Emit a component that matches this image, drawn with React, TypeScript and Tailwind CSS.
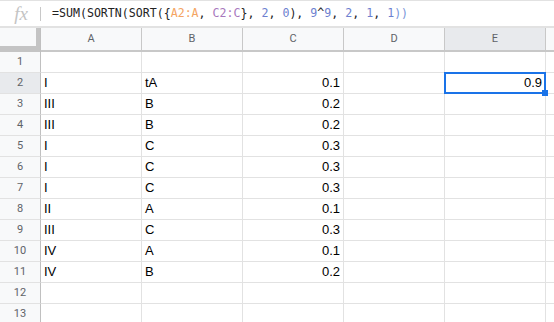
import React from 'react';

type Row = { a?: string; b?: string; c?: string; e?: string };

const rows: Row[] = [
  {},
  { a: 'I', b: 'tA', c: '0.1', e: '0.9' },
  { a: 'III', b: 'B', c: '0.2' },
  { a: 'III', b: 'B', c: '0.2' },
  { a: 'I', b: 'C', c: '0.3' },
  { a: 'I', b: 'C', c: '0.3' },
  { a: 'I', b: 'C', c: '0.3' },
  { a: 'II', b: 'A', c: '0.1' },
  { a: 'III', b: 'C', c: '0.3' },
  { a: 'IV', b: 'A', c: '0.1' },
  { a: 'IV', b: 'B', c: '0.2' },
  {},
  {},
];

const cols = ['A', 'B', 'C', 'D', 'E'];

// formula pieces: [text, colour class]
const formula: [string, string][] = [
  ['=SUM(SORTN(SORT({', 'text-[#222]'],
  ['A2:A', 'text-[#f4a462]'],
  [', ', 'text-[#222]'],
  ['C2:C', 'text-[#a877bd]'],
  ['}, ', 'text-[#222]'],
  ['2', 'text-[#6d7fd0]'],
  [', ', 'text-[#222]'],
  ['0', 'text-[#6d7fd0]'],
  ['), ', 'text-[#222]'],
  ['9', 'text-[#6d7fd0]'],
  ['^', 'text-[#222]'],
  ['9', 'text-[#6d7fd0]'],
  [', ', 'text-[#222]'],
  ['2', 'text-[#6d7fd0]'],
  [', ', 'text-[#222]'],
  ['1', 'text-[#6d7fd0]'],
  [', ', 'text-[#222]'],
  ['1', 'text-[#6d7fd0]'],
  ['))', 'text-[#7895d8]'],
];

const cell =
  'h-[21px] border-r border-b border-[#e2e2e2] px-[3px] text-[13px] leading-[20px] text-black truncate';

function FormulaBar() {
  return (
    <div className="flex items-center h-[28px] border-t border-b-2 border-[#e2e2e2] bg-white">
      <div className="w-[40px] flex items-center justify-center pl-[2px]">
        <span className="italic text-[19px] leading-none text-[#c4c4c4] font-['Liberation_Serif',serif]">
          fx
        </span>
      </div>
      <div className="w-px h-[14px] bg-[#c8c8c8]" />
      <div className="pl-[11px] pt-[1px] font-['DejaVu_Sans_Mono',monospace] text-[11.6px] whitespace-pre">
        {formula.map(([t, c], i) => (
          <span key={i} className={c}>
            {t}
          </span>
        ))}
      </div>
    </div>
  );
}

export default function App() {
  return (
    <div className="w-[554px] h-[322px] overflow-hidden bg-white font-['Liberation_Sans',Arial,sans-serif]">
      <FormulaBar />
      <div className="relative grid grid-cols-[41px_101px_101px_101px_101px_101px_1fr]">
        {/* header row */}
        <div className="h-[24px] bg-[#c4c4c4] border-r border-[#c0c0c0]">
          <div className="w-[36px] h-[18px] bg-[#f8f9fa]" />
        </div>
        {cols.map((c) => (
          <div
            key={c}
            className={`h-[24px] border-r border-b-2 border-[#c8c8c8] flex items-center justify-center text-[11px] font-['Roboto',sans-serif] text-[#5f6368] ${
              c === 'E' ? 'bg-[#e8eaed]' : 'bg-[#f8f9fa]'
            }`}
          >
            {c}
          </div>
        ))}
        <div className="h-[24px] border-b-2 border-[#c8c8c8] bg-[#f8f9fa]" />

        {rows.map((r, i) => (
          <React.Fragment key={i}>
            <div
              className={`h-[21px] border-r border-b border-r-[#c0c0c0] border-b-[#e2e2e2] flex items-center justify-center text-[11px] font-['Roboto',sans-serif] text-[#5f6368] ${
                i === 1 ? 'bg-[#e8eaed]' : 'bg-[#f8f9fa]'
              }`}
            >
              {i + 1}
            </div>
            <div className={cell}>{r.a}</div>
            <div className={cell}>{r.b}</div>
            <div className={`${cell} text-right`}>{r.c}</div>
            <div className={cell}></div>
            <div className={`${cell} text-right`}>{r.e}</div>
            <div className="h-[21px] border-b border-[#e2e2e2]" />
          </React.Fragment>
        ))}

        {/* selection on E2 */}
        <div className="absolute left-[444px] top-[44px] w-[102px] h-[22px] border-2 border-[#1a73e8] pointer-events-none" />
        <div className="absolute left-[542px] top-[62px] w-[6px] h-[6px] bg-[#1a73e8]" />
      </div>
    </div>
  );
}
